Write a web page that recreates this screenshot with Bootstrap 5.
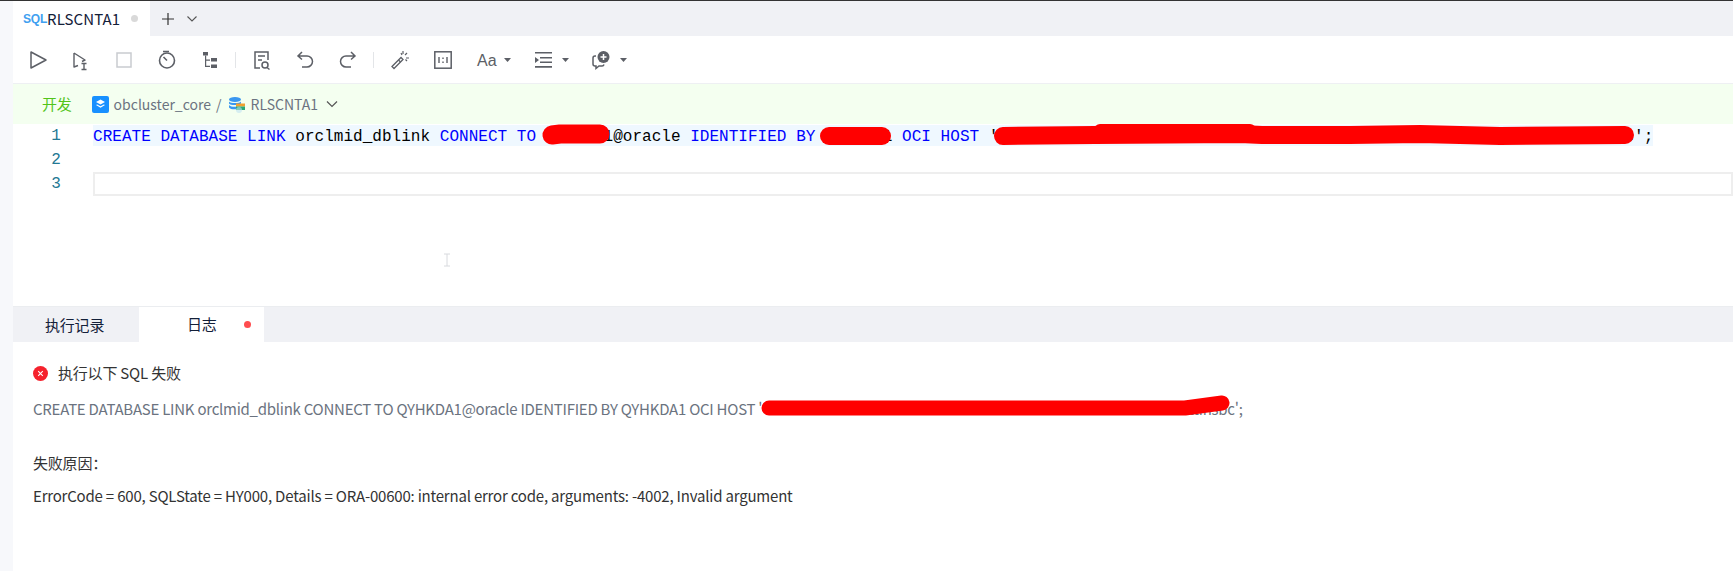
<!doctype html>
<html lang="zh-CN">
<head>
<meta charset="utf-8">
<title>RLSCNTA1</title>
<link href="https://cdn.jsdelivr.net/npm/bootstrap@5.3.0/dist/css/bootstrap.min.css" rel="stylesheet">
<style>
html,body{height:571px;overflow:hidden;background:#fff}
body{font-family:"Noto Sans CJK SC","Liberation Sans",sans-serif;font-size:14px;color:#132039;position:relative;border-top:1px solid #333}
.app-strip{width:13px;background:#f7f8fb;flex:none}
.tabbar{height:35px;background:#f0f1f5}
.doc-tab{width:137px;background:#fff;padding-left:10px}
.sql-mark{font:700 12px "Liberation Sans Narrow","Liberation Sans",sans-serif;color:#40a0f0;width:20px;flex:none;letter-spacing:-.2px}
.doc-name{margin-left:4px;color:#132039;line-height:20px;font-size:15px;letter-spacing:.1px}
.doc-dot{width:7px;height:7px;border-radius:50%;background:#d9d9d9;margin-left:11px;flex:none}
.tab-add{margin-left:11px;gap:11px}
.tab-add svg{display:block}
.tools{height:48px;border-bottom:1px solid #eef0f3;padding-left:13px}
.tool{width:24px;height:24px;margin-right:19px;flex:none}
.tool svg{display:block;overflow:visible}
.tool-sep{width:1px;height:16px;background:#e3e5e8;margin:0 14px 0 -6px;flex:none}
.tool-wide{width:36px;margin-right:14px}
.ctx{height:40px;background:#f4fff0;padding-left:29px;color:#6b7380;line-height:20px}
.env{color:#52c41a;margin-right:20px;font-size:15px;letter-spacing:-.2px}
.ctx svg{flex:none;display:block}
.crumb{margin:0 5px 0 5px}
.crumb-sep{margin-right:6px}
.chev{margin-left:2px}
.editor{height:182px;font:16px/24px "Liberation Mono",monospace;letter-spacing:.03px}
.code-line{height:24px}
.line-no{width:48px;text-align:right;color:#237893;flex:none;line-height:25px}
.code-body{margin-left:32px;flex:1 1 auto;color:#000;min-width:0;white-space:pre}
.hl{background:#eff8ff;display:inline-block;height:21px;line-height:24px;margin-top:1px;vertical-align:top}
.kw{color:#0000ff}
.cur-line{border:2px solid #eeeeee;height:24px}
.ptabs{height:36px;background:#f0f1f5;border-top:1px solid #ebedf0;font-size:15px;letter-spacing:-.2px}
.ptab{width:125px;color:#132039;padding-left:32px;line-height:20px}
.ptab-on{background:#fff;width:125px;padding-left:48px;margin-left:1px;color:#132039;position:relative;justify-content:space-between;padding-right:13px}
.rdot{width:7px;height:7px;border-radius:50%;background:#ff4d4f}
.logpane{padding:16px 20px 0;line-height:20px;font-size:15px;letter-spacing:-.2px}
.log-head{height:30px;color:#333}
.log-head svg{margin-right:10px;flex:none}
.log-sql{color:#6b7380;margin-top:11px;white-space:nowrap;letter-spacing:-.25px}
.gap-host{display:inline-block;width:426px;height:1px}
.log-cause{margin-top:34px;color:#333}
.log-err{margin-top:13px;color:#333;white-space:nowrap}
.overlay{position:absolute;left:0;top:-1px;pointer-events:none}
</style>
</head>
<body class="d-flex">
<div class="app-strip"></div>
<div class="flex-grow-1 d-flex flex-column" style="min-width:0">
  <div class="tabbar d-flex align-items-stretch">
    <div class="doc-tab d-flex align-items-center">
      <span class="sql-mark">SQL</span><span class="doc-name">RLSCNTA1</span><span class="doc-dot"></span>
    </div>
    <div class="tab-add d-flex align-items-center">
      <svg width="14" height="14" viewBox="0 0 14 14"><path d="M7 1v12M1 7h12" stroke="#333" stroke-width="1.2" fill="none"/></svg>
      <svg width="12" height="12" viewBox="0 0 12 12"><path d="M1.5 3.5 6 8l4.5-4.5" stroke="#555" stroke-width="1.1" fill="none"/></svg>
    </div>
  </div>

  <div class="tools d-flex align-items-center">
    <div class="tool"><svg width="24" height="24" viewBox="0 0 24 24" fill="none" stroke="#5c5f66" stroke-width="1.5"><path d="M5 4v16l15-8z" stroke-linejoin="round"/></svg></div>
    <div class="tool"><svg width="24" height="24" viewBox="0 0 24 24" fill="none" stroke="#5c5f66" stroke-width="1.4"><path d="M5 5v14l4-1.500M5 5l11 7-3 1.500" stroke-linejoin="round"/><path d="M12.500 15.500h5M15 15.500v6M12.500 21.500h5"/></svg></div>
    <div class="tool"><svg width="24" height="24" viewBox="0 0 24 24" fill="none" stroke="#c9cbd0" stroke-width="1.5"><rect x="5" y="5" width="14" height="14"/></svg></div>
    <div class="tool"><svg width="24" height="24" viewBox="0 0 24 24" fill="none" stroke="#5c5f66" stroke-width="1.6"><circle cx="12" cy="12.500" r="7.500"/><path d="M8 3.500h6M12 12.500 8.500 9"/></svg></div>
    <div class="tool"><svg width="24" height="24" viewBox="0 0 24 24" fill="#5c5f66"><rect x="5" y="4" width="5" height="3.500"/><rect x="13" y="10" width="6" height="3.500"/><rect x="13" y="16.500" width="6" height="3.500"/><path d="M7 7.500h1.200v4h3.800v1.200H8.200v5H12v1.200H7z"/></svg></div>
    <div class="tool-sep"></div>
    <div class="tool"><svg width="24" height="24" viewBox="0 0 24 24" fill="none" stroke="#5c5f66" stroke-width="1.5"><path d="M10 20H5V4h13v8"/><path d="M8 8h7M8 12h4"/><circle cx="15" cy="17" r="3"/><path d="m17 19.500 2.500 2"/></svg></div>
    <div class="tool"><svg width="24" height="24" viewBox="0 0 24 24" fill="none" stroke="#5c5f66" stroke-width="1.5"><path d="M9 4 5 8l4 3.500M5 8h9c3 0 5.500 2.500 5.500 5.500S17 19 14 19H9"/></svg></div>
    <div class="tool"><svg width="24" height="24" viewBox="0 0 24 24" fill="none" stroke="#5c5f66" stroke-width="1.5"><path d="m15 4 4 4-4 3.500M19 8h-9C7 8 4.500 10.500 4.500 13.500S7 19 10 19h5"/></svg></div>
    <div class="tool-sep"></div>
    <div class="tool"><svg width="24" height="24" viewBox="0 0 24 24" fill="none" stroke="#5c5f66" stroke-width="1.3"><path d="m4 18.500 9-9 2 2-9 9z"/><path d="m10.500 12 2 2"/><path d="M15 3v3M19 5l-2 2M21 10h-3M14 7l-1-2M19 13l-1.500-1.500" stroke-width="1.200"/></svg></div>
    <div class="tool"><svg width="24" height="24" viewBox="0 0 24 24" fill="none"><rect x="3.800" y="3.800" width="16.400" height="16.400" stroke="#5c5f66" stroke-width="1.500"/><path d="M8 9v6M16 9v6" stroke="#5c5f66" stroke-width="1.400"/><path d="M12 9.500v1.500M12 13.500V15" stroke="#5c5f66" stroke-width="1.400"/></svg></div>
    <div class="tool tool-wide d-flex align-items-center"><svg width="36" height="24" viewBox="0 0 36 24"><text x="3" y="18" font-family="Liberation Sans" font-size="16" fill="#5c5f66">Aa</text><path d="m30 10 3.500 4 3.500-4z" fill="#5c5f66"/></svg></div>
    <div class="tool tool-wide d-flex align-items-center ms-2"><svg width="36" height="24" viewBox="0 0 36 24" fill="#5c5f66"><path d="M3 4h17v1.500H3zM8 9h12v1.500H8zM8 13.500h12V15H8zM3 18h17v1.800H3zM3 9v6l4-3z"/><path d="m30 10 3.500 4 3.500-4z"/></svg></div>
    <div class="tool tool-wide d-flex align-items-center ms-2"><svg width="36" height="24" viewBox="0 0 36 24" fill="none"><path d="M6 8H5a2 2 0 0 0-2 2v6a2 2 0 0 0 2 2h1v2.500l3-2.500h3a2 2 0 0 0 2-1.500" stroke="#5c5f66" stroke-width="1.500"/><circle cx="13.500" cy="9" r="6" fill="#5c5f66"/><path d="M10.500 9h6M13.500 6v6" stroke="#fff" stroke-width="1.500"/><path d="m30 10 3.500 4 3.500-4z" fill="#5c5f66"/></svg></div>
  </div>

  <div class="ctx d-flex align-items-center">
    <span class="env">开发</span>
    <svg width="17" height="17" viewBox="0 0 17 17"><rect width="17" height="17" rx="2" fill="#1890ff"/><path d="m8.500 3.500 4.500 2.500-4.500 2.500L4 6z" fill="#fff"/><path d="m4 9 1.200-.6 3.300 1.800 3.300-1.800L13 9l-4.500 2.700z" fill="#fff"/></svg>
    <span class="crumb">obcluster_core</span><span class="crumb-sep">/</span>
    <svg width="18" height="18" viewBox="0 0 18 18"><ellipse cx="7" cy="4.500" rx="6" ry="2.500" fill="#3a97f0"/><path d="M1 6.500c1 2 11 2 12 0v2c-1 2-11 2-12 0z" fill="#3a97f0"/><path d="M1 10c1 2 7 2 8 1.500V14c-2 .8-7 .3-8-1.500z" fill="#3a97f0"/><rect x="8" y="8.500" width="9" height="3" fill="#f0a030"/><rect x="8" y="11.500" width="9" height="3.500" fill="#2aa876"/><circle cx="11" cy="15" r="3" fill="#bfe3f2" opacity=".6"/></svg>
    <span class="crumb">RLSCNTA1</span>
    <svg class="chev" width="14" height="14" viewBox="0 0 14 14"><path d="M2 4.500 7 9.500l5-5" stroke="#555" stroke-width="1.200" fill="none"/></svg>
  </div>

  <div class="editor">
    <div class="code-line d-flex"><span class="line-no">1</span><div class="code-body"><span class="hl"><span class="kw">CREATE DATABASE LINK</span> orclmid_dblink <span class="kw">CONNECT TO</span> QYHKDA1@oracle <span class="kw">IDENTIFIED BY</span> QYHKDA1 <span class="kw">OCI HOST</span> 'xxxxxxxxxxxxxxxxxxxxxxxxxxxxxxxxxxxxxxxxxxxxxxxxxxxxxxxxxxxxxxxxxc';</span></div></div>
    <div class="code-line d-flex"><span class="line-no">2</span><div class="code-body"></div></div>
    <div class="code-line d-flex"><span class="line-no">3</span><div class="code-body cur-line"></div></div>
  </div>

  <div class="ptabs d-flex align-items-stretch">
    <div class="ptab d-flex align-items-center">执行记录</div>
    <div class="ptab-on d-flex align-items-center"><span>日志</span><span class="rdot"></span></div>
  </div>

  <div class="logpane flex-grow-1">
    <div class="log-head d-flex align-items-center">
      <svg width="15" height="15" viewBox="0 0 15 15"><circle cx="7.500" cy="7.500" r="7.500" fill="#f5222d"/><path d="m5.200 5.200 4.600 4.600m0-4.600L5.200 9.800" stroke="#fff" stroke-width="1.100"/></svg>
      <span>执行以下 SQL 失败</span>
    </div>
    <div class="log-sql">CREATE DATABASE LINK orclmid_dblink CONNECT TO QYHKDA1@oracle IDENTIFIED BY QYHKDA1 OCI HOST '<span class="gap-host"></span>ttinsbc';</div>
    <div class="log-cause">失败原因：</div>
    <div class="log-err">ErrorCode = 600, SQLState = HY000, Details = ORA-00600: internal error code, arguments: -4002, Invalid argument</div>
  </div>
</div>

<svg class="overlay" width="1733" height="571" viewBox="0 0 1733 571" fill="none" stroke="#ff0000" stroke-linecap="round" stroke-linejoin="round" aria-hidden="true">
  <path d="M552 135 L560 134 L600 134" stroke-width="19"/>
  <path d="M829 136 L882 136" stroke-width="18"/>
  <path d="M1003 136 L1095 135 L1240 134 L1262 135 L1350 135 L1420 134 L1500 136 L1625 135" stroke-width="18"/>
  <path d="M1100 130 L1250 130" stroke-width="12"/>
  <path d="M769 408 L1185 408 L1222 403" stroke-width="15"/>
  <path d="M444 254h6M447 254v12M444 266h6" stroke="#d8dade" stroke-width="1" stroke-linecap="butt"/>
</svg>
</body>
</html>
